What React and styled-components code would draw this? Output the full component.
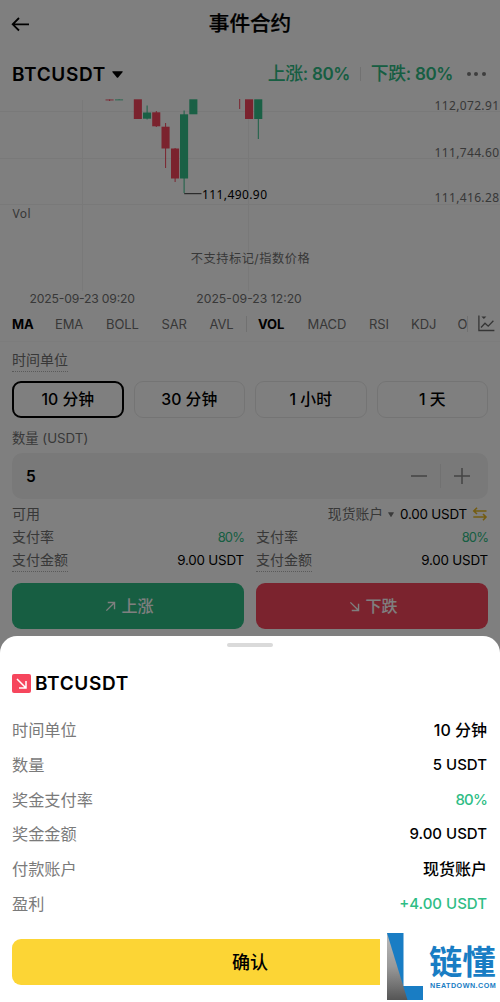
import React from "react";
import styled, { createGlobalStyle } from "styled-components";

const Global = createGlobalStyle`
  * { box-sizing: border-box; }
  body { margin: 0; background: #fff; }
`;

const UP = "#2ebd85";
const DOWN = "#f6465d";
const MUTED = "#707070";

const Screen = styled.main`
  position: relative;
  width: 500px;
  height: 1002px;
  overflow: hidden;
  background: #fff;
  color: #000;
  font-family: Inter, "Noto Sans CJK SC", sans-serif;
  font-size: 14px;
  white-space: nowrap;
`;

const TopBar = styled.header`
  display: grid;
  grid-template-columns: 40px 1fr 40px;
  align-items: center;
  height: 47px;
  padding: 0 10px;
  svg { display: block; }
`;

const Title = styled.h1`
  margin: 0;
  font-size: 20.6px;
  line-height: 30px;
  font-weight: 500;
  text-align: center;
  -webkit-text-stroke: 0.25px #000;
`;

const PairBar = styled.section`
  display: flex;
  align-items: center;
  height: 52px;
  padding: 2px 14px 0 12px;
`;

const Pair = styled.div`
  display: flex;
  align-items: center;
  gap: 6px;
  margin-right: auto;
  font-size: 19px;
  font-weight: 600;
  letter-spacing: 0.65px;
`;

const Payout = styled.span`
  color: ${UP};
  font-size: 17.9px;
  line-height: 24px;
  font-weight: 500;
  letter-spacing: -0.45px;
  b { font-size: 17px; font-weight: 600; }
`;

const Split = styled.i`
  width: 1px;
  height: ${(p) => p.$h}px;
  margin: ${(p) => p.$m || "0"};
  background: #e2e2e2;
  flex: none;
`;

const Dots = styled.div`
  display: flex;
  gap: 3.6px;
  margin-left: 14px;
  i { width: 4px; height: 4px; border-radius: 50%; background: #7c7c7c; }
`;

const ChartSvg = styled.svg`
  display: block;
  width: 500px;
  height: 210px;
`;

const Indicators = styled.nav`
  display: flex;
  align-items: center;
  height: 33px;
  padding: 0 5px 3px 12px;
  border-bottom: 1px solid #f8f8f8;
`;

const IndicatorList = styled.div`
  display: flex;
  align-items: center;
  width: 455px;
`;

const Indicator = styled.span`
  flex: none;
  width: ${(p) => p.$w}px;
  font-size: 13px;
  line-height: 20px;
  letter-spacing: -0.1px;
  font-weight: ${(p) => (p.$on ? 700 : 400)};
  color: ${(p) => (p.$on ? "#000" : MUTED)};
`;

const Form = styled.section`
  display: flex;
  flex-direction: column;
  padding: 7px 12px 0;
`;

const Label = styled.span`
  align-self: flex-start;
  font-size: ${(p) => p.$size || 14}px;
  line-height: 22px;
  color: ${MUTED};
  border-bottom: ${(p) => (p.$dotted ? "1px dotted #b4b4b4" : "0")};
`;

const Options = styled.div`
  display: grid;
  grid-template-columns: repeat(4, 1fr);
  gap: 10px;
  margin: 9px 0 9px;
`;

const Option = styled.button`
  height: 37px;
  padding: 0;
  border: ${(p) => (p.$on ? "2px solid #000" : "1px solid #e9e9e9")};
  border-radius: 9px;
  background: transparent;
  color: #000;
  font: 500 15.8px/24px Inter, "Noto Sans CJK SC", sans-serif;
`;

const Amount = styled.div`
  display: flex;
  align-items: center;
  height: 46px;
  margin: 4px 0;
  padding: 0 17px 0 14px;
  border-radius: 10px;
  background: #f3f3f3;
  font-size: 15.5px;
  font-weight: 600;
  b { flex: 1; font-weight: 600; }
`;

const Balance = styled.div`
  display: flex;
  align-items: center;
  height: 23px;
  padding-bottom: 1px;
  svg { margin-left: 5px; }
`;

const Account = styled.span`
  display: flex;
  align-items: center;
  margin-left: auto;
  margin-right: 6px;
  line-height: 22px;
  color: ${MUTED};
  font-size: 13.8px;
`;

const Value = styled.span`
  font-size: ${(p) => (p.$up ? 13 : 13.4)}px;
  line-height: ${(p) => (p.$up ? 22 : 23)}px;
  letter-spacing: ${(p) => (p.$up ? "-0.9px" : "-0.2px")};
  color: ${(p) => (p.$up ? UP : "#000")};
`;

const Sides = styled.div`
  display: grid;
  grid-template-columns: 1fr 1fr;
  column-gap: 12px;
`;

const Quote = styled.div`
  display: flex;
  justify-content: space-between;
  align-items: flex-start;
  height: 23px;
`;

const SideButton = styled.button`
  display: flex;
  justify-content: center;
  align-items: center;
  gap: 5px;
  height: 46px;
  padding: 0 0 0 3px;
  margin-top: 11px;
  border: 0;
  border-radius: 9px;
  color: #fff;
  background: ${(p) => (p.$down ? DOWN : UP)};
  font: 500 16px/24px Inter, "Noto Sans CJK SC", sans-serif;
`;

const Dim = styled.div`
  position: absolute;
  inset: 0;
  background: rgba(0, 0, 0, 0.5);
`;

const Sheet = styled.section`
  position: absolute;
  left: 0;
  right: 0;
  bottom: 0;
  height: 366px;
  padding: 7px 12px 0;
  border-radius: 17px 17px 0 0;
  background: #fff;
`;

const Handle = styled.div`
  width: 46px;
  height: 4px;
  margin: 0 auto;
  border-radius: 2px;
  background: #dadada;
`;

const SheetTitle = styled.h2`
  display: flex;
  align-items: center;
  gap: 4px;
  height: 28px;
  margin: 22px 0 16px;
  font-size: 19px;
  font-weight: 600;
  letter-spacing: 0.65px;
`;

const Detail = styled.div`
  display: flex;
  justify-content: space-between;
  align-items: center;
  height: 34.7px;
  padding-right: 1px;
  font-size: 16.2px;
  line-height: 24px;
  color: #7a7a7a;
`;

const DetailValue = styled.strong`
  font-size: ${(p) => (p.$cjk ? 16 : 15)}px;
  font-weight: 500;
  letter-spacing: ${(p) => (p.$tight ? "-0.8px" : "0")};
  color: ${(p) => (p.$up ? UP : "#000")};
`;

const Confirm = styled.button`
  display: block;
  width: 476px;
  height: 46px;
  margin-top: 18px;
  padding: 1px 0 0;
  border: 0;
  border-radius: 9px;
  background: #fcd535;
  color: #000;
  font: 500 18px/26px Inter, "Noto Sans CJK SC", sans-serif;
`;

const Watermark = styled.aside`
  position: absolute;
  right: 0;
  bottom: 0;
  display: flex;
  gap: 6px;
  width: 120px;
  height: 70px;
  padding: 1px 0 0 7px;
  background: #fff;
  color: #197dc4;
`;

const Brand = styled.div`
  display: flex;
  flex-direction: column;
  padding-top: 9px;
`;

const BrandName = styled.b`
  font-size: 33.3px;
  line-height: 40px;
  font-weight: 700;
`;

const BrandSite = styled.small`
  font: 700 7.2px/8px "Liberation Sans", sans-serif;
  letter-spacing: 0.47px;
  padding: 0 0 0 1px;
`;

function Caret({ w = 10, h = 7, color = "#000" }) {
  return (
    <svg width={w} height={h} viewBox="0 0 10 7" preserveAspectRatio="none">
      <path d="M.3 1Q0 .4.7.2h8.6q.7.2.4.8L5.6 6.5q-.6.7-1.2 0Z" fill={color} />
    </svg>
  );
}

function Diagonal({ down, size = 11, color = "#fff", width = 1.5 }) {
  return (
    <svg width={size} height={size} viewBox="0 0 12 12" fill="none" stroke={color} strokeWidth={width}>
      {down ? <path d="m1.5 1.5 8.7 8.7M10.4 3v7.4H3" /> : <path d="m1.5 10.5 8.7-8.7M3 1.6h7.4V9" />}
    </svg>
  );
}

// [x, body top, body height, wick top, wick bottom, rising]
const CANDLES = [
  [105.5, 0.5, 0.9, 0.5, 2, false],
  [115, 0.5, 0.8, 0.5, 1, true],
  [133.8, 0.3, 19.7, 1, 19, false],
  [143, 13.5, 6.2, 6.5, 20.5, true],
  [152.2, 13.3, 14, 12, 28, false],
  [161.5, 27.7, 21.8, 24, 69, false],
  [171, 49.5, 30, 49, 83, false],
  [180, 15.3, 64.2, 11.5, 94, true],
  [189.3, 0.3, 15, 1, 15, true],
  [245, 0.3, 19.7, 1, 19, false],
  [254.2, 0.3, 19.7, 1, 40, true],
];

function Chart() {
  return (
    <ChartSvg viewBox="0 0 500 210">
      <path d="M0 12.5H500M0 59.5H500M0 105.5H500M82.5 1V192M248.5 20V192" stroke="#f3f3f3" />
      {CANDLES.map(([x, y, h, top, bottom, up]) => (
        <g key={x} fill={up ? "#34c18b" : DOWN}>
          <rect x={x} y={y} width="8.1" height={h} />
          <rect x={x + 3.6} y={top} width="1" height={bottom - top} />
        </g>
      ))}
      <path d="M239.7 0v10" stroke={DOWN} />
      <path d="M184.2 94.7h17.3" stroke="#333" />
      <g fontFamily='"Noto Sans", "Noto Sans CJK SC", sans-serif' fontSize="12" fill={MUTED}>
        <text x="434.5" y="11" textLength="64.5">112,072.91</text>
        <text x="434.5" y="58" textLength="64.5">111,744.60</text>
        <text x="434.5" y="102.5" textLength="64.5">111,416.28</text>
        <text x="202" y="100" textLength="65" fill="#000">111,490.90</text>
        <text x="12.5" y="118.5" textLength="18">Vol</text>
      </g>
      <g fontFamily='Inter, "Noto Sans CJK SC", sans-serif' fontSize="12.2" fill={MUTED}>
        <text x="190.7" y="163.8" textLength="119">不支持标记/指数价格</text>
        <text x="29.5" y="204" textLength="105.5">2025-09-23 09:20</text>
        <text x="196.3" y="204" textLength="105.5">2025-09-23 12:20</text>
      </g>
    </ChartSvg>
  );
}

const DETAILS = [
  ["时间单位", "10 分钟", false],
  ["数量", "5 USDT", false],
  ["奖金支付率", "80%", true],
  ["奖金金额", "9.00 USDT", false],
  ["付款账户", "现货账户", false],
  ["盈利", "+4.00 USDT", true],
];

export default function App() {
  return (
    <Screen>
      <Global />
      <TopBar>
        <svg width="20" height="16" viewBox="0 0 20 16" fill="none" stroke="#000" strokeWidth="1.8">
          <path d="M19 8.3H2.8M9 2 2.7 8.3 9 14.5" />
        </svg>
        <Title>事件合约</Title>
      </TopBar>
      <PairBar>
        <Pair>BTCUSDT <Caret w={11} h={7} /></Pair>
        <Payout>上涨: <b>80%</b></Payout>
        <Split $h={14} $m="0 10px" />
        <Payout>下跌: <b>80%</b></Payout>
        <Dots><i /><i /><i /></Dots>
      </PairBar>
      <Chart />
      <Indicators>
        <IndicatorList>
          <Indicator $w={43} $on>MA</Indicator>
          <Indicator $w={51}>EMA</Indicator>
          <Indicator $w={55.5}>BOLL</Indicator>
          <Indicator $w={48}>SAR</Indicator>
          <Indicator $w={36.5}>AVL</Indicator>
          <Split $h={16} $m="0 11px 0 0" />
          <Indicator $w={49.5} $on>VOL</Indicator>
          <Indicator $w={61.5}>MACD</Indicator>
          <Indicator $w={42}>RSI</Indicator>
          <Indicator $w={46.5}>KDJ</Indicator>
          <Indicator $w={10.5}>O</Indicator>
        </IndicatorList>
        <Split $h={16} $m="0 10px 0 0" />
        <svg width="17" height="17" viewBox="0 0 17 17" fill="none" stroke="#6b6b6b" strokeWidth="1.3">
          <path d="M.9.5v15h15.5M3 12.5l4-4.3 3.2 3 5.2-5.5" />
          <path d="M3.4 1.4h5L5.9 4Z" fill="#6b6b6b" stroke="none" />
        </svg>
      </Indicators>
      <Form>
        <Label $dotted>时间单位</Label>
        <Options>
          <Option $on>10 分钟</Option>
          <Option>30 分钟</Option>
          <Option>1 小时</Option>
          <Option>1 天</Option>
        </Options>
        <Label $size={13.3}>数量 (USDT)</Label>
        <Amount>
          <b>5</b>
          <svg width="18" height="18" viewBox="0 0 18 18" stroke="#888" strokeWidth="1.5"><path d="M1 9h16" /></svg>
          <Split $h={24} $m="0 12px" />
          <svg width="18" height="18" viewBox="0 0 18 18" stroke="#888" strokeWidth="1.5"><path d="M1 9h16M9 1v16" /></svg>
        </Amount>
        <Balance>
          <Label>可用</Label>
          <Account>现货账户<Caret w={6} h={5} color="#777" /></Account>
          <Value>0.00 USDT</Value>
          <svg width="16" height="14" viewBox="0 0 16 14" fill="none" stroke="#e8b923" strokeWidth="1.6">
            <path d="M14.5 4H2.2M5 .8 1.8 4 5 7M1.3 10h12.4M11 7l3 3-3 3.2" />
          </svg>
        </Balance>
        <Sides>
          {[false, true].map((down) => (
            <div key={String(down)}>
              <Quote><Label>支付率</Label><Value $up>80%</Value></Quote>
              <Quote><Label $dotted>支付金额</Label><Value>9.00 USDT</Value></Quote>
            </div>
          ))}
          <SideButton><Diagonal />上涨</SideButton>
          <SideButton $down><Diagonal down />下跌</SideButton>
        </Sides>
      </Form>
      <Dim />
      <Sheet>
        <Handle />
        <SheetTitle>
          <svg width="19" height="19" viewBox="0 0 19 19" fill="none">
            <rect width="19" height="19" rx="2" fill={DOWN} />
            <path d="m5 5 8.5 8.5M14 7v7H7" stroke="#fff" strokeWidth="1.5" />
          </svg>
          BTCUSDT
        </SheetTitle>
        {DETAILS.map(([label, value, up]) => (
          <Detail key={label}>
            <span>{label}</span>
            <DetailValue $up={up} $tight={value === "80%"} $cjk={/[一-龥]/.test(value)}>{value}</DetailValue>
          </Detail>
        ))}
        <Confirm>确认</Confirm>
      </Sheet>
      <Watermark>
        <svg width="36" height="67" viewBox="0 0 36 67">
          <defs>
            <linearGradient id="metal" x1="0" y1="0" x2="0" y2="1">
              <stop offset="0" stopColor="#bbb" />
              <stop offset=".5" stopColor="#999" />
              <stop offset="1" stopColor="#555" />
            </linearGradient>
          </defs>
          <path d="M0 0h16.5v53H36v14H0Z" fill="#197dc4" />
          <path d="M0 0 20.5 67H0Z" fill="url(#metal)" />
        </svg>
        <Brand>
          <BrandName>链懂</BrandName>
          <BrandSite>NEATDOWN.COM</BrandSite>
        </Brand>
      </Watermark>
    </Screen>
  );
}
